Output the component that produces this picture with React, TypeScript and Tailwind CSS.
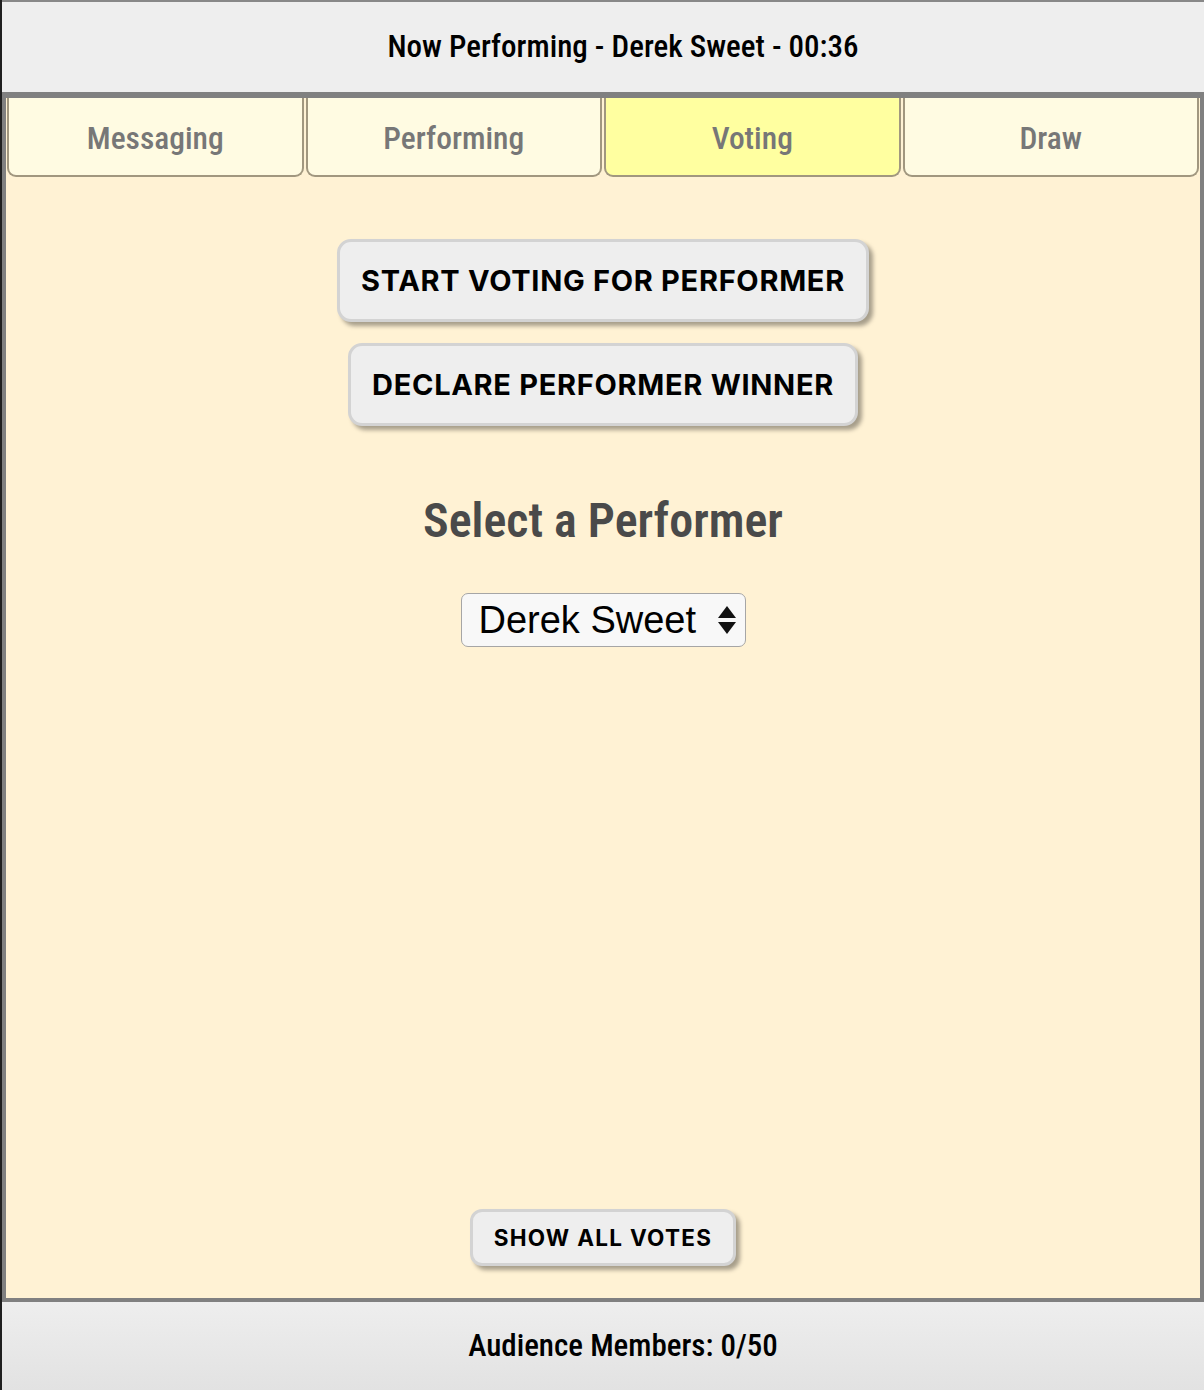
import { useState } from "react";

const tabs = ["Messaging", "Performing", "Voting", "Draw"];

const condensed = "font-['Roboto_Condensed','Roboto',sans-serif] font-stretch-condensed";

function ActionButton({ label, big }: { label: string; big?: boolean }) {
    return (
        <button
            className={
                big
                    ? "h-[83px] px-[21px] rounded-[14px] border-[3px] border-[#d3d3d3] bg-[#eeeeee] shadow-[4px_4px_4px_rgba(0,0,0,0.35)] font-['Inter',sans-serif] font-bold text-[29px] tracking-[0.7px] text-black"
                    : "h-[57px] px-[21px] rounded-[12px] border-[3px] border-[#d3d3d3] bg-[#eeeeee] shadow-[4px_4px_4px_rgba(0,0,0,0.35)] font-['Inter',sans-serif] font-bold text-[22.5px] tracking-[1.3px] text-black"
            }
        >
            {label}
        </button>
    );
}

export default function App() {
    const [active, setActive] = useState("Voting");
    const [performer, setPerformer] = useState("Derek Sweet");

    return (
        <div className="w-[1204px] h-[1390px] bg-[#1f1f1f] pl-[2px] flex flex-col">
            <div className="flex flex-col h-full border-t-2 border-[#888888]">
                <header className={`h-[90px] bg-[#eeeeee] flex items-center justify-center pl-[40px] text-[31px] font-medium text-black ${condensed}`}>
                    Now Performing - Derek Sweet - 00:36
                </header>

                <main className="flex-1 flex flex-col bg-[#fff2d4] border-x-4 border-b-4 border-t-[6px] border-[#808080]">
                    <nav className="grid grid-cols-4 gap-[2px] px-px">
                        {tabs.map(tab => (
                            <button
                                key={tab}
                                onClick={() => setActive(tab)}
                                className={`h-[79px] pt-[4px] border-2 border-t-0 border-[#a1977f] rounded-b-[9px] text-[31.5px] font-medium text-[#777777] ${condensed} ${
                                    active === tab ? "bg-[#ffffa0]" : "bg-[#fffbe2]"
                                }`}
                            >
                                {tab}
                            </button>
                        ))}
                    </nav>

                    <div className="flex-1 flex flex-col items-center pt-[62px] pb-[32px]">
                        <ActionButton big label="START VOTING FOR PERFORMER" />
                        <div className="mt-[21px]">
                            <ActionButton big label="DECLARE PERFORMER WINNER" />
                        </div>

                        <h2 className={`mt-[59px] text-[48px] font-semibold text-[#4a4a4a] ${condensed}`}>
                            Select a Performer
                        </h2>

                        <div className="relative mt-[36px]">
                            <select
                                value={performer}
                                onChange={e => setPerformer(e.target.value)}
                                className="appearance-none w-[285px] h-[54px] pl-[17px] pr-[44px] rounded-[7px] border border-[#a6a6a6] bg-[#f8f8f8] font-['Liberation_Sans',Arial,sans-serif] text-[38px] leading-none text-black outline-none"
                            >
                                <option>Derek Sweet</option>
                                <option>Jane Doe</option>
                            </select>
                            <svg
                                className="pointer-events-none absolute right-[8px] top-[12px]"
                                width="22"
                                height="30"
                                viewBox="0 0 22 30"
                            >
                                <path d="M11 1 L20 13 L2 13 Z" fill="#111" />
                                <path d="M2 17 L20 17 L11 29 Z" fill="#111" />
                            </svg>
                        </div>

                        <div className="mt-auto">
                            <ActionButton label="SHOW ALL VOTES" />
                        </div>
                    </div>
                </main>

                <footer className={`h-[88px] bg-gradient-to-b from-[#eeeeee] to-[#e2e2e2] flex items-center justify-center pl-[40px] text-[31px] font-medium text-black ${condensed}`}>
                    Audience Members: 0/50
                </footer>
            </div>
        </div>
    );
}
